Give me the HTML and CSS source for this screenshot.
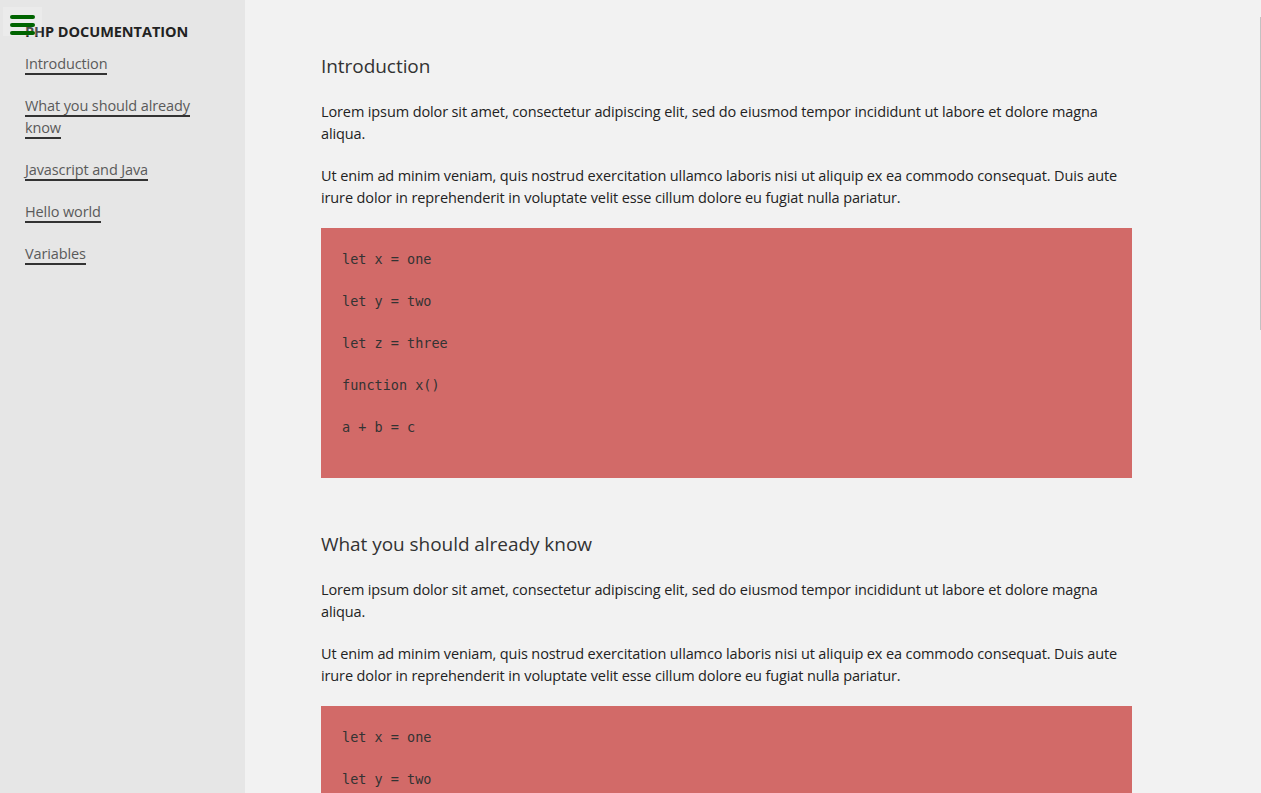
FILE: index.html
```html
<!DOCTYPE html>
<html lang="en">
<head>
<meta charset="utf-8">
<title>PHP Documentation</title>
<link rel="stylesheet" href="styles.css">
</head>
<body>
<button class="menu-btn" aria-label="Menu">
  <svg width="25" height="20" viewBox="0 0 25 20">
    <rect x="0" y="0" width="25" height="4" rx="2" fill="#006400"/>
    <rect x="0" y="8" width="25" height="4" rx="2" fill="#006400"/>
    <rect x="0" y="16" width="25" height="4" rx="2" fill="#006400"/>
  </svg>
</button>
<div class="layout">
  <nav class="sidebar">
    <header class="nav-title">PHP DOCUMENTATION</header>
    <ul class="nav-list">
      <li><a class="nav-link" href="#introduction">Introduction</a></li>
      <li><a class="nav-link" href="#what">What you should already know</a></li>
      <li><a class="nav-link" href="#js">Javascript and Java</a></li>
      <li><a class="nav-link" href="#hello">Hello world</a></li>
      <li><a class="nav-link" href="#vars">Variables</a></li>
    </ul>
  </nav>
  <main class="main">
    <section class="section" id="introduction">
      <h2 class="section-title">Introduction</h2>
      <p class="text">Lorem ipsum dolor sit amet, consectetur adipiscing elit, sed do eiusmod tempor incididunt ut labore et dolore magna aliqua.</p>
      <p class="text">Ut enim ad minim veniam, quis nostrud exercitation ullamco laboris nisi ut aliquip ex ea commodo consequat. Duis aute irure dolor in reprehenderit in voluptate velit esse cillum dolore eu fugiat nulla pariatur.</p>
      <div class="code">
        <p>let x = one</p>
        <p>let y = two</p>
        <p>let z = three</p>
        <p>function x()</p>
        <p>a + b = c</p>
      </div>
    </section>
    <section class="section" id="what">
      <h2 class="section-title">What you should already know</h2>
      <p class="text">Lorem ipsum dolor sit amet, consectetur adipiscing elit, sed do eiusmod tempor incididunt ut labore et dolore magna aliqua.</p>
      <p class="text">Ut enim ad minim veniam, quis nostrud exercitation ullamco laboris nisi ut aliquip ex ea commodo consequat. Duis aute irure dolor in reprehenderit in voluptate velit esse cillum dolore eu fugiat nulla pariatur.</p>
      <div class="code">
        <p>let x = one</p>
        <p>let y = two</p>
        <p>let z = three</p>
        <p>function x()</p>
        <p>a + b = c</p>
      </div>
    </section>
  </main>
</div>
<div class="scroll-thumb"></div>
</body>
</html>
```
FILE: styles.css
```css
html, body {
  margin: 0;
  padding: 0;
  height: 100%;
  overflow: hidden;
}
body {
  font-family: "Open Sans", "Noto Sans", sans-serif;
  font-size: 14.5px;
  letter-spacing: -0.12px;
  color: #222;
  background: #f2f2f2;
}
.layout {
  display: flex;
  min-height: 100vh;
}
.sidebar {
  width: 245px;
  flex: 0 0 245px;
  background: #e6e6e6;
  padding: 22px 0 0 25px;
  box-sizing: border-box;
}
.nav-title {
  font-weight: 700;
  font-size: 14.5px;
  line-height: 20px;
  letter-spacing: -0.05px;
  color: #222;
  margin: 0 0 11px;
}
.nav-list {
  list-style: none;
  margin: 0;
  padding: 0;
  width: 180px;
}
.nav-list li {
  margin: 0 0 20px;
  line-height: 22px;
}
.nav-link {
  color: #5a5a5a;
  text-decoration: none;
  border-bottom: 2px solid #333;
}
.main {
  flex: 1;
  padding: 0 0 0 76px;
}
.section {
  width: 811px;
  padding-top: 53px;
}
.section-title {
  margin: 0 0 22px;
  font-size: 19px;
  line-height: 26px;
  font-weight: 400;
  letter-spacing: -0.05px;
  color: #333;
}
.text {
  margin: 0 0 20px;
  line-height: 22px;
}
.text:last-of-type {
  margin-bottom: 19px;
}
.code {
  background: #d26a68;
  padding: 20px 21px;
  font-family: "DejaVu Sans Mono", monospace;
  font-size: 13.5px;
  letter-spacing: 0;
  color: #333;
}
.code p {
  margin: 0 0 20px;
  line-height: 22px;
}
.menu-btn {
  position: fixed;
  left: 3px;
  top: 7px;
  width: 39px;
  height: 29px;
  padding: 6px 0 0 7px;
  box-sizing: border-box;
  border: 0;
  background: rgba(255, 255, 255, 0.2);
  display: block;
  z-index: 2;
}
.menu-btn svg {
  display: block;
}
.scroll-thumb {
  position: fixed;
  right: 0;
  top: 17px;
  width: 1px;
  height: 313px;
  background: #c2c2c2;
}
```
